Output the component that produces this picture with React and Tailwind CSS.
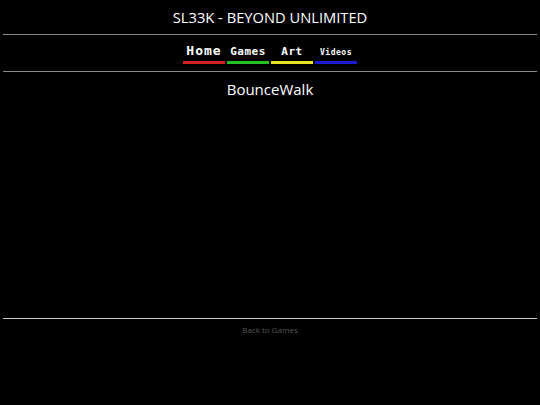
const navItems = [
  { label: 'Home', bar: 'bg-[#d42020]', text: 'text-[13px] font-bold tracking-[1px]' },
  { label: 'Games', bar: 'bg-[#22c022]', text: 'text-[11px] font-bold tracking-[0.5px]' },
  { label: 'Art', bar: 'bg-[#e8e020]', text: 'text-[11px] font-bold tracking-[0.5px]' },
  { label: 'Videos', bar: 'bg-[#1a1ad0]', text: 'text-[8px] font-bold tracking-[0.5px]' },
];

export default function App() {
  return (
    <div className="min-h-[405px] bg-black text-white flex flex-col">
      <h1 className="h-[34px] flex items-center justify-center text-[14.7px] font-['Open_Sans',sans-serif]">
        SL33K - BEYOND UNLIMITED
      </h1>
      <div className="mx-[3px] h-px bg-[#8a8a8a]" />
      <nav className="h-[36px] flex justify-center items-end gap-[2px] pb-[7px] font-['DejaVu_Sans_Mono',monospace]">
        {navItems.map((item) => (
          <a key={item.label} href="#" className="w-[42px] flex flex-col items-center">
            <span className={`${item.text} leading-none`}>{item.label}</span>
            <span className={`mt-[4px] h-[3px] w-full ${item.bar}`} />
          </a>
        ))}
      </nav>
      <div className="mx-[3px] h-px bg-[#8a8a8a]" />
      <h2 className="h-[35px] flex items-center justify-center text-[15px] font-['Open_Sans',sans-serif]">
        BounceWalk
      </h2>
      <div className="h-[211px]" />
      <div className="mx-[3px] h-px bg-[#c8c8c8]" />
      <a href="#" className="mt-[5px] self-center text-[8px] text-[#555] font-['Open_Sans',sans-serif]">
        Back to Games
      </a>
    </div>
  );
}
